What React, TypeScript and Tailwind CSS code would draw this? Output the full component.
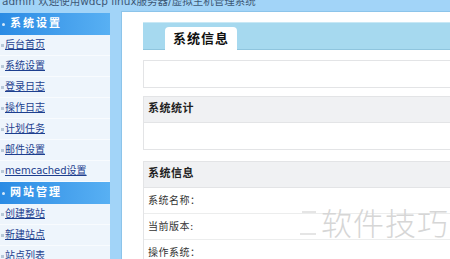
import React from 'react';

const menuGroups = [
  {
    title: '系统设置',
    items: ['后台首页', '系统设置', '登录日志', '操作日志', '计划任务', '邮件设置', 'memcached设置'],
  },
  {
    title: '网站管理',
    items: ['创建整站', '新建站点', '站点列表'],
  },
];

const infoRows = ['系统名称：', '当前版本:', '操作系统：'];

const SideMenu: React.FC = () => (
  <div className="w-[110px] mt-[2px] flex flex-col bg-[#eef5fc]">
    {menuGroups.map((group) => (
      <div key={group.title}>
        <div className="h-[22px] flex items-center bg-gradient-to-r from-[#2a8be4] to-[#58b0f3] text-white">
          <span className="ml-[2px] w-[3px] h-[3px] bg-white/80 rounded-full" />
          <span className="ml-[5px] text-[11px] font-bold tracking-[2px]">{group.title}</span>
        </div>
        {group.items.map((item) => (
          <div key={item} className="h-[21px] flex items-center border-b border-[#f8fbfe]">
            <span className="ml-[1px] w-[3px] h-[3px] bg-[#b8c8d8]" />
            <a href="#" className="ml-[1px] text-[10px] text-[#1d3f8f] underline leading-none">
              {item}
            </a>
          </div>
        ))}
      </div>
    ))}
  </div>
);

const Section: React.FC<{ title?: string; rows?: string[]; bodyRows?: number }> = ({ title, rows = [], bodyRows = 0 }) => (
  <div className="border border-r-0 border-[#e3e4e6] bg-white">
    {title && (
      <div className="h-[26px] flex items-center px-[4px] bg-[#f0f1f3] border-b border-[#e3e4e6] text-[11px] font-bold text-[#222] tracking-[0.5px]">
        {title}
      </div>
    )}
    {rows.map((r) => (
      <div key={r} className="h-[26px] flex items-center px-[4px] border-b border-[#eceded] text-[10px] text-[#333] tracking-[0.5px]">
        {r}
      </div>
    ))}
    {Array.from({ length: bodyRows }).map((_, i) => (
      <div key={i} className="h-[26px]" />
    ))}
  </div>
);

export default function App() {
  return (
    <div
      className="relative w-[450px] h-[259px] overflow-hidden bg-[#a2d4f8]"
      style={{ fontFamily: '"DejaVu Sans", "Noto Sans CJK SC", sans-serif' }}
    >
      <div className="h-[11px] overflow-hidden">
        <p className="-mt-[6px] pl-[2px] text-[10.5px] leading-[14px] text-[#3d5876] whitespace-nowrap">
          admin 欢迎使用wdcp linux服务器/虚拟主机管理系统
        </p>
      </div>

      <div className="flex">
        <SideMenu />
        <div className="w-[11px]" />
        <div className="flex-1 h-[248px] bg-white border-l border-t border-[#8cc4ea] pl-[21px] pt-[10px]">
          <div className="h-[28px] bg-[#a6d9ef] border-t border-[#c8e8f5] border-b border-b-[#8fc5de] flex items-end">
            <div className="ml-[22px] w-[72px] h-[23px] -mb-[1px] bg-white rounded-t-[4px] flex items-center justify-center text-[13px] font-bold text-[#111] tracking-[1px]">
              系统信息
            </div>
          </div>

          <div className="mt-[10px]">
            <Section bodyRows={1} />
          </div>
          <div className="mt-[8px]">
            <Section title="系统统计" bodyRows={1} />
          </div>
          <div className="mt-[11px]">
            <Section title="系统信息" rows={infoRows} />
          </div>
        </div>
      </div>

      <div className="absolute left-[300px] top-[204px] flex items-center text-[#d6d6d6] pointer-events-none">
        <svg width="18" height="34" viewBox="0 0 18 34" className="mr-[3px]">
          <path d="M2 8 H16" stroke="#dcdcdc" strokeWidth="1.5" fill="none" />
          <path d="M0 30 H16" stroke="#dcdcdc" strokeWidth="1.5" fill="none" />
        </svg>
        <span className="text-[31px] leading-none font-light tracking-[1px]" style={{ fontFamily: '"Noto Sans CJK SC", sans-serif' }}>
          软件技巧
        </span>
      </div>
    </div>
  );
}
